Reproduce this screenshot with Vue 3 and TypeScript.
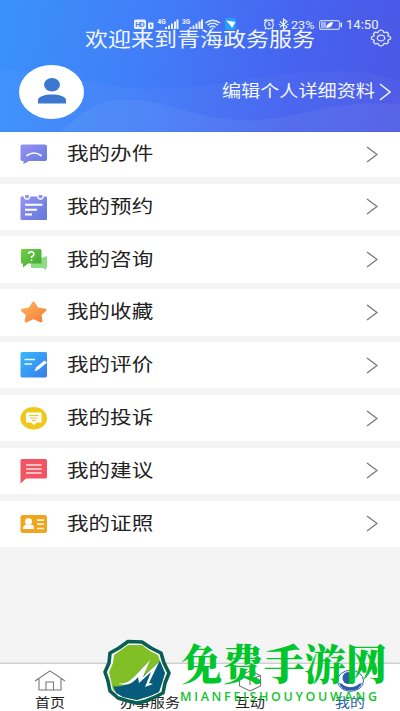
<script setup lang="ts">
interface MenuItem {
  icon: string
  label: string
}

const items: MenuItem[] = [
  { icon: 'task', label: '我的办件' },
  { icon: 'booking', label: '我的预约' },
  { icon: 'consult', label: '我的咨询' },
  { icon: 'favorite', label: '我的收藏' },
  { icon: 'review', label: '我的评价' },
  { icon: 'complaint', label: '我的投诉' },
  { icon: 'suggest', label: '我的建议' },
  { icon: 'license', label: '我的证照' },
]
</script>

<template>
  <div class="page">
    <header class="hero">
      <svg class="waves" viewBox="0 0 400 132" preserveAspectRatio="none">
        <path d="M0 71C70 68 100 92 165 89C240 85 275 70 345 72C370 72 385 76 400 82V132H0Z" fill="#fff" fill-opacity=".03" />
        <path d="M60 132C80 115 95 101 120 100C165 98 190 119 245 121C300 121 330 98 400 105V132Z" fill="#fff" fill-opacity=".05" />
      </svg>
      <div class="status">
        <svg class="signals" viewBox="0 0 104 14">
          <rect x="0" y="1.500" width="12" height="9.500" rx="1.500" fill="#eaf2ff" />
          <text x="1.300" y="9" font-size="7.500" font-weight="700" textLength="9.400" fill="#4a82f6">HD</text>
          <rect x="14" y="4.500" width="5.500" height="6.500" rx="1" fill="#eaf2ff" />
          <path d="M16 6.500h1.500v2.500H16z" fill="#4a82f6" />
          <g fill="#eaf2ff">
            <text x="23.500" y="5.800" font-size="6.500" font-weight="700">4G</text>
            <path d="M31 9h2v2h-2zM34 7.500h2V11h-2zM37 5.500h2V11h-2zM40 3.500h2V11h-2zM42.500 1.500h2V11h-2z" />
            <text x="48" y="5.800" font-size="6.500" font-weight="700">3G</text>
            <path d="M55.500 9h2v2h-2zM58.500 7.500h2V11h-2zM61.500 5.500h2V11h-2zM64.500 3.500h2V11h-2zM67 1.500h2V11h-2z" />
          </g>
          <g fill="none" stroke="#eaf2ff" stroke-width="1.400">
            <path d="M71.500 5Q78.500 -.5 86 5M73.500 7.300Q78.500 3 84 7.300M75.500 9.300Q78.500 7 81.500 9.300" />
          </g>
          <circle cx="78.500" cy="10.500" r="1" fill="#eaf2ff" />
          <rect x="91" y="0" width="11" height="12" rx="3" fill="#25a0fb" />
          <path d="M92 2.500L101.500 4L98 10L96.500 7.500Z" fill="#fff" />
        </svg>
        <svg class="alarm" viewBox="0 0 26 13" fill="none" stroke="#eaf2ff" stroke-width="1.200">
          <circle cx="6" cy="6.500" r="4.300" />
          <path d="M1 3L3.500 1M8.500 1L11 3M6 4v3h2M3 10l-1 1.300M9 10l1 1.300" />
          <path d="M17 3.500l7 5.500l-3.500 3V1L24 3.800L17 9M16 6.500h1.500M24 6.500h1.500" />
        </svg>
        <span class="percent">23%</span>
        <svg class="battery" viewBox="0 0 24 10">
          <rect x=".6" y=".6" width="19.800" height="8.800" rx="2" fill="none" stroke="#c8d5ff" stroke-width="1.100" />
          <rect x="2" y="2" width="5" height="6" fill="#9bb1fb" />
          <path d="M7 7.500C8 4 10 2.500 14 2C13.500 6 11 8.500 7 7.500Z" fill="#fff" />
          <rect x="21.500" y="2.500" width="1.500" height="5" rx=".7" fill="#e4ebff" />
        </svg>
        <span class="clock">14:50</span>
      </div>
      <div class="titlebar">
        <h1 class="title">欢迎来到青海政务服务</h1>
        <svg class="gear" viewBox="0 0 22 20" preserveAspectRatio="none" fill="none" stroke="#dfe8ff" stroke-width="1.300" stroke-linejoin="round">
          <path d="M9 2L11 1L13 2L13.800 4L17 3.500L18.500 5.500L17.800 7.500L20.500 9V11L18 12.500L18.500 14.500L17 16.500L14 16L13 18L11 19L9 18L8 16L5 16.500L3.500 14.500L4.200 12.500L1.500 11V9L4.200 7.500L3.500 5.500L5 3.500L8 4Z" />
          <ellipse cx="11" cy="10" rx="3.700" ry="3.200" />
        </svg>
      </div>
      <div class="profile">
        <div class="avatar">
          <svg viewBox="0 0 28 26" fill="#3c78d0">
            <ellipse cx="14" cy="6.700" rx="8" ry="6.700" />
            <path d="M0 25.500V22C0 14.500 28 14.500 28 22V25.500Z" />
          </svg>
        </div>
        <div class="edit">
          <span class="edit-text">编辑个人详细资料</span>
          <svg class="edit-arrow" viewBox="0 0 12 18"><path d="M1 1L11 9L1 17" fill="none" stroke="#f0f4ff" stroke-width="1.600" /></svg>
        </div>
      </div>
    </header>

    <main class="menu">
      <div v-for="item in items" :key="item.icon" class="row">
        <svg class="icon" viewBox="0 0 28 28">
          <defs>
            <linearGradient id="violet" x1="0" y1="0" x2="1" y2="1"><stop stop-color="#9792f5" /><stop offset="1" stop-color="#6279dc" /></linearGradient>
            <linearGradient id="green" x1="0" y1="0" x2="1" y2="1"><stop stop-color="#74cf45" /><stop offset="1" stop-color="#3ca735" /></linearGradient>
            <linearGradient id="orange" x1="0" y1="0" x2="1" y2="1"><stop stop-color="#ffb65a" /><stop offset="1" stop-color="#f17d36" /></linearGradient>
            <linearGradient id="blue" x1="0" y1="0" x2="1" y2="1"><stop stop-color="#35baff" /><stop offset="1" stop-color="#397ce9" /></linearGradient>
          </defs>
          <g v-if="item.icon === 'task'">
            <path d="M2.500 4.500H25Q27 4.500 27 6.500V19Q27 21 25 21H9L3.500 24V21Q.5 21 .5 19V6.500Q.5 4.500 2.500 4.500Z" fill="url(#violet)" />
            <path d="M7 15.500Q14 10.500 21 15.500" fill="none" stroke="#fff" stroke-width="1.700" stroke-linecap="round" />
          </g>
          <g v-else-if="item.icon === 'booking'">
            <rect x=".5" y="3.500" width="26.500" height="23.500" rx="1.200" fill="url(#violet)" />
            <path d="M4.500 2v3q2.500 2.500 5 0V2M18 2v3q2.500 2.500 5 0V2" fill="#9593f1" stroke="#fff" stroke-width="1.300" />
            <path d="M5 11.700H22.500M5 16.700H17M5 21.500H12" stroke="#fff" stroke-width="1.900" />
          </g>
          <g v-else-if="item.icon === 'consult'">
            <path d="M21 12L27 10V21L26 22V24L23 22H11V17H21Z" fill="#8ddd84" />
            <path d="M2 3H20Q21.500 3 21.500 4.500V17.500H8L3 21.500V17.500H1V4.500Q1 3 2 3Z" fill="url(#green)" />
            <path d="M8.500 8Q9 5.500 11.500 5.800Q14.500 6.500 13.700 8.800Q13.500 10 11.500 11V12M11.500 13.500V15" fill="none" stroke="#fff" stroke-width="1.600" />
          </g>
          <path v-else-if="item.icon === 'favorite'" d="M12.300 4.300Q13.500 2.500 14.700 4.300L18 9.500L25.500 10.700Q27.500 11.400 26 12.900L21.500 17L22.500 22.800Q22 25 20.300 24.200L13.500 21.300L6.700 24.200Q4.500 25 4.700 22.800L5.800 17L1 12.900Q0 11.400 2 10.700L9 9.500Z" fill="url(#orange)" />
          <g v-else-if="item.icon === 'review'">
            <rect x=".5" y="1" width="26.500" height="25.500" rx="1.700" fill="url(#blue)" />
            <path d="M4.500 8.500H15M4.500 13H12" stroke="#e9faff" stroke-width="1.600" />
            <path d="M24.500 9.500L27 11.500L18.500 18.500L14.500 20.500L16 16.500Z" fill="#fff" />
          </g>
          <g v-else-if="item.icon === 'complaint'">
            <ellipse cx="13.700" cy="14.200" rx="13.300" ry="11.300" fill="#eec81b" />
            <path d="M7 8.500H20.500Q21.500 8.500 21.500 9.500V18.500H17L14 21L11 18.500H6V9.500Q6 8.500 7 8.500Z" fill="#fff" />
            <path d="M9 11.500H18.500M10 14H17.500M12 16.300H15.500" stroke="#edc720" stroke-width="1.200" />
          </g>
          <g v-else-if="item.icon === 'suggest'">
            <path d="M2 2H25.500Q27 2 27 3.500V20Q27 21.500 25.500 21.500H6L.5 26.500V3.500Q.5 2 2 2Z" fill="#f25561" />
            <path d="M6 8H21.500M6 12H21.500M6 16H21.500" stroke="#ffe1e1" stroke-width="1.500" />
          </g>
          <g v-else>
            <rect x=".5" y="5" width="26.500" height="18" rx="2.500" fill="#f0a51e" />
            <ellipse cx="8.500" cy="11.500" rx="3.500" ry="3.200" fill="#fff" />
            <path d="M3 19V17Q4 14.500 6.500 14.500H10.500Q13.500 14.500 14 17V19Z" fill="#fff" />
            <path d="M17 10.200H24M17 14.200H24M17 18.500H24" stroke="#fff4d5" stroke-width="1.700" />
          </g>
        </svg>
        <span class="label">{{ item.label }}</span>
        <svg class="arrow" viewBox="0 0 12 17"><path d="M1 1L11 8.500L1 16" fill="none" stroke="#777" stroke-width="1.300" /></svg>
      </div>
    </main>

    <nav class="tabs">
      <div class="tab">
        <svg viewBox="0 0 32 22" fill="none" stroke="#777" stroke-width="1.100"><path d="M1 11L16 .8L31 11M5 9V20H27V9M12 20V12H19.500V20" /></svg>
        <span>首页</span>
      </div>
      <div class="tab"><svg viewBox="0 0 32 22" /><span>办事服务</span></div>
      <div class="tab">
        <svg viewBox="0 0 32 22" fill="none" stroke="#777" stroke-width="1.100"><path d="M16 1L26.500 5.500V16L16 21L5.500 16V5.500ZM5.500 5.500L16 10L26.500 5.500M16 10V15" /></svg>
        <span>互动</span>
      </div>
      <div class="tab active">
        <svg viewBox="0 0 32 22"><ellipse cx="16.500" cy="10.800" rx="13" ry="10.500" fill="none" stroke="#2a5caa" /><ellipse cx="14" cy="8" rx="5.500" ry="6" fill="#2a5caa" /><path d="M5 13Q8 13 10 15.500Q16.500 19 23 15.500Q25 13 28 13Q25.500 20.500 16.500 20.500T5 13Z" fill="#2a5caa" /></svg>
        <span>我的</span>
      </div>
    </nav>

    <svg class="watermark" viewBox="0 0 400 81">
      <path d="M128 11.500L142 12L151 18L161 23L164 33L169 43L165 53L163 63L153 68L146 71L137 73L128 71L118 68L110 61L108 51L105 42L109 33L110 23L119 18Z" fill="#fff" stroke="#085e55" stroke-width="3.600" stroke-linejoin="round" />
      <path d="M128 15L142 15L150 21L158 25L161 34L165 43L162 53L159 62L150 66L137 70L123 67L113 60L109 42L113 33L114 25L121 20Z" fill="#80bf25" />
      <path d="M113 56Q126 59 137 44L148 32L144 46L160 31L165 43L162 53L159 62L150 66L137 70L123 67L116 63Z" fill="#075b7d" />
      <path d="M114 51Q124 58 135 46L150 30L143 47L159 32L149 53L153 54L145 57L151 42L139 53L138 47Q128 60 114 51Z" fill="#fff" />
      <text class="brand" x="181" y="50" textLength="206" lengthAdjust="spacingAndGlyphs">免费手游网</text>
      <text class="domain" x="180" y="70.700" textLength="197">MIANFEISHOUYOUWANG</text>
    </svg>
  </div>
</template>

<style>
body { margin: 0; background: #f4f4f4; overflow: hidden; }
</style>

<style scoped>
.page { position: relative; width: 400px; height: 711px; display: flex; flex-direction: column; overflow: hidden; background: #f4f4f4; color: #222; font-family: Roboto, "Noto Sans CJK SC", sans-serif; }
svg { display: block; flex: none; }
.hero { position: relative; height: 131.500px; flex: none; box-sizing: border-box; padding-top: 16px; background: linear-gradient(100deg, #3a92fb 0%, #427bf7 40%, #4663ef 72%, #4b57e5 100%); color: #f3f7ff; }
.waves { position: absolute; inset: 0; width: 100%; height: 100%; }
.status { position: relative; display: flex; height: 14px; padding-left: 134px; align-items: center; }
.signals { width: 104px; height: 14px; margin-top: 3px; font-family: Roboto, sans-serif; }
.alarm { width: 26px; height: 13px; margin: 3px 0 0 25px; }
.percent { width: 24px; margin: 3px 0 0 2px; font-size: 11.500px; transform: scaleX(1.100); transform-origin: left; }
.battery { width: 24px; height: 10px; margin: 3px 0 0 4px; }
.clock { margin: 3px 0 0 3px; font-size: 12px; transform: scaleX(1.090); transform-origin: left; }
.titlebar { position: relative; display: flex; height: 26px; padding: 0 8px 0 85px; justify-content: space-between; align-items: center; margin-top: -3px; }
.title { margin: 0; font-size: 20px; font-weight: 400; line-height: 26px; white-space: nowrap; transform: scaleX(1.150); transform-origin: left; }
.gear { width: 22px; height: 18px; margin-top: -4px; }
.profile { position: relative; display: flex; height: 56px; padding: 0 9px 0 19px; margin-top: 11px; justify-content: space-between; align-items: center; }
.avatar { display: flex; width: 65px; height: 54px; border-radius: 50%; background: #fff; align-items: center; justify-content: center; }
.avatar svg { width: 28px; height: 26px; margin-top: -3px; }
.edit { display: flex; align-items: center; gap: 4px; }
.edit-text { font-size: 16.500px; line-height: 24px; transform: scaleX(1.160); transform-origin: right; white-space: nowrap; }
.edit-arrow { width: 12px; height: 18px; }
.menu { display: flex; flex-direction: column; gap: 6.500px; }
.row { display: flex; height: 46.350px; flex: none; padding: 0 22px 0 20px; box-sizing: border-box; align-items: center; background: #fff; }
.row:first-child { height: 45.500px; }
.icon { width: 28px; height: 28px; }
.label { margin-left: 19px; font-size: 18.500px; line-height: 26px; transform: scaleX(1.165); transform-origin: left; }
.arrow { width: 12px; height: 17px; margin-left: auto; }
.tabs { display: flex; height: 48.500px; box-sizing: border-box; margin-top: auto; background: #fff; border-top: 1px solid #cfcfcf; box-shadow: 0 -1px 1px #e5e5e5; }
.tab { display: flex; width: 100px; flex-direction: column; align-items: center; padding-top: 6px; font-size: 13px; line-height: 18px; }
.tab svg { width: 32px; height: 22px; margin-bottom: 2px; }
.tab span { transform: scaleX(1.150); }
.active { color: #2a5caa; }
.watermark { position: absolute; left: 0; top: 630px; width: 400px; height: 81px; }
.brand { font-family: "Noto Serif CJK SC", "Noto Sans CJK SC", serif; font-size: 42px; font-weight: 900; fill: #00c52c; }
.domain { font-family: "Open Sans", sans-serif; font-size: 12.500px; font-weight: 600; fill: #13c52f; }
</style>
